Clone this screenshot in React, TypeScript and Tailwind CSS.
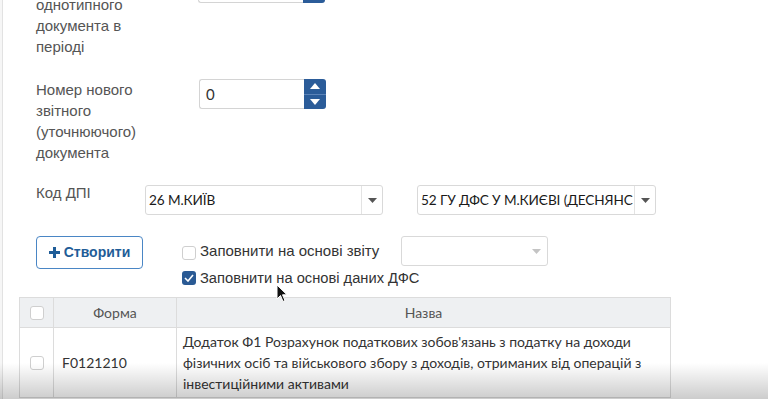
import React from "react";

const helv = { fontFamily: '"Liberation Sans", Arial, sans-serif' };
const lato = { fontFamily: 'Lato, "Open Sans", sans-serif' };

function Spinner() {
  return (
    <div className="flex h-[30px] w-[22px] flex-col overflow-hidden rounded-r-[3px] bg-[#2b5c99]">
      <div className="flex flex-1 items-center justify-center border-b border-[#5b83b8]">
        <svg width="10" height="6" viewBox="0 0 10 6"><path d="M5 0L10 6H0Z" fill="#fff" /></svg>
      </div>
      <div className="flex flex-1 items-center justify-center">
        <svg width="10" height="6" viewBox="0 0 10 6"><path d="M0 0H10L5 6Z" fill="#fff" /></svg>
      </div>
    </div>
  );
}

function NumberInput({ value }: { value: string }) {
  return (
    <div className="flex">
      <div className="flex h-[30px] w-[105px] items-center rounded-l-[3px] border border-r-0 border-[#d4d4d4] bg-white pl-[6px] text-[15px] text-[#333]" style={lato}>
        {value}
      </div>
      <Spinner />
    </div>
  );
}

function Select({ text, width, disabled }: { text: string; width: string; disabled?: boolean }) {
  return (
    <div className={`flex h-[30px] ${width} items-stretch rounded-[3px] border border-[#d9d9d9] bg-white`}>
      <div className="flex min-w-0 flex-1 items-center overflow-hidden whitespace-nowrap pl-[3px] text-[13.6px] tracking-[-0.1px] text-[#1a1a1a]" style={lato}>
        {text}
      </div>
      <div className={`flex w-[21px] shrink-0 items-center justify-center ${disabled ? "" : "border-l border-[#e3e3e3]"}`}>
        <svg width="9" height="5" viewBox="0 0 9 5"><path d="M0 0H9L4.5 5Z" fill={disabled ? "#c4c4c4" : "#555"} /></svg>
      </div>
    </div>
  );
}

function Box({ checked }: { checked?: boolean }) {
  if (checked)
    return (
      <div className="flex h-[14px] w-[14px] items-center justify-center rounded-[3px] bg-[#2a5a94]">
        <svg width="10" height="8" viewBox="0 0 10 8"><path d="M1 4L4 7L9 1" stroke="#fff" strokeWidth="1.6" fill="none" /></svg>
      </div>
    );
  return <div className="h-[14px] w-[14px] rounded-[3px] border border-[#cfcfcf] bg-white" />;
}

export default function App() {
  return (
    <div className="relative h-[399px] w-[768px] overflow-hidden bg-white">
      <div className="absolute left-0 top-0 h-full w-[3px] border-r border-[#e2e2e2] bg-[#f6f6f6]" />
      <div className="pl-[36px]">
        {/* row 1 */}
        <div className="mt-[-27px] flex">
          <div className="mt-[21px] w-[162px] text-[15px] leading-[21px] text-[#555]" style={helv}>
            <div>однотипного</div>
            <div>документа в</div>
            <div>періоді</div>
          </div>
          <div>
            <NumberInput value="" />
          </div>
        </div>
        {/* row 2 */}
        <div className="mt-[22px] flex">
          <div className="w-[163px] text-[15px] leading-[21px] text-[#555]" style={helv}>
            <div>Номер нового</div>
            <div>звітного</div>
            <div>(уточнюючого)</div>
            <div>документа</div>
          </div>
          <div>
            <NumberInput value="0" />
          </div>
        </div>
        {/* row 3 */}
        <div className="mt-[19px] flex">
          <div className="w-[109px] text-[15px] leading-[21px] text-[#555]" style={helv}>Код ДПІ</div>
          <div className="mt-[3px] flex gap-[34px]">
            <Select text="26 М.КИЇВ" width="w-[238px]" />
            <Select text="52 ГУ ДФС У М.КИЄВІ (ДЕСНЯНС" width="w-[239px]" />
          </div>
        </div>
        {/* row 4 */}
        <div className="mt-[21px] flex">
          <button className="flex h-[33px] w-[107px] items-center justify-center gap-[4px] rounded-[4px] border border-[#4a86c5] bg-white text-[14px] font-semibold text-[#1f5d98]" style={helv}>
            <svg width="11" height="11" viewBox="0 0 11 11"><path d="M4 0H7V4H11V7H7V11H4V7H0V4H4Z" fill="#1f5d98" /></svg>
            Створити
          </button>
          <div className="ml-[39px] flex flex-col">
            <div className="flex h-[30px] items-center">
              <div className="mt-[3px]"><Box /></div>
              <div className="ml-[4px] w-[201px] text-[15px] text-[#333]" style={helv}>Заповнити на основі звіту</div>
              <Select text="" width="w-[147px]" disabled />
            </div>
            <div className="mt-[1px] flex items-center">
              <Box checked />
              <div className="ml-[4px] text-[14.7px] text-[#333]" style={helv}>Заповнити на основі даних ДФС</div>
            </div>
          </div>
        </div>
      </div>
      {/* table */}
      <div className="ml-[19px] mt-[8px] w-[652px] border border-[#dcdcdc] text-[14px]" style={lato}>
        <div className="flex h-[30px] border-b border-[#dcdcdc] bg-[#eef0f2] text-[#555]">
          <div className="flex w-[34px] items-center justify-center border-r border-[#dcdcdc]"><Box /></div>
          <div className="flex w-[123px] items-center justify-center border-r border-[#dcdcdc]">Форма</div>
          <div className="flex flex-1 items-center justify-center">Назва</div>
        </div>
        <div className="flex bg-white text-[#333]">
          <div className="flex w-[34px] items-center justify-center border-r border-[#dcdcdc]"><Box /></div>
          <div className="flex w-[123px] items-center border-r border-[#dcdcdc] pl-[8px]">F0121210</div>
          <div className="flex-1 px-[6px] py-[3px] leading-[21px]">
            Додаток Ф1 Розрахунок податкових зобов'язань з податку на доходи фізичних осіб та військового збору з доходів, отриманих від операцій з інвестиційними активами
          </div>
        </div>
      </div>
      {/* cursor */}
      <svg className="absolute left-[276px] top-[284px]" width="12" height="19" viewBox="0 0 12 19">
        <path d="M1 1V15L4.5 11.5L7 17.5L9 16.5L6.5 10.8H11Z" fill="#111" stroke="#fff" strokeWidth="1" />
      </svg>
      {/* bottom video shading */}
      <div className="pointer-events-none absolute bottom-0 left-0 h-[36px] w-full bg-gradient-to-b from-transparent to-[rgba(0,0,0,0.2)]" />
    </div>
  );
}
